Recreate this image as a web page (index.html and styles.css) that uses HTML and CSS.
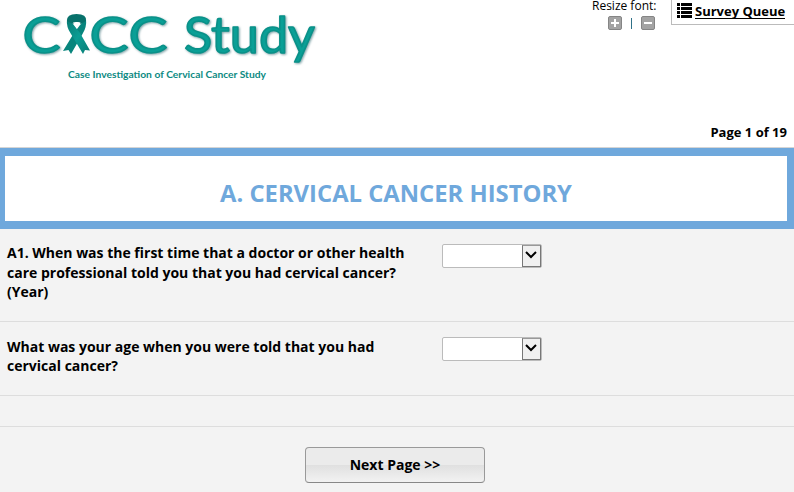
FILE: index.html
```html
<!DOCTYPE html>
<html lang="en">
<head>
    <meta charset="UTF-8">
    <meta name="viewport" content="width=device-width, initial-scale=1.0">
    <title>CACC Study</title>
    <link rel="stylesheet" href="styles.css">
</head>
<body>
    <header class="header">
        <svg class="logo" width="330" height="90" viewBox="0 0 330 90" role="img" aria-label="CACC Study">
            <defs>
                <linearGradient id="ribbon" x1="0" y1="0" x2="1" y2="1">
                    <stop offset="0" stop-color="#087a73"/>
                    <stop offset="0.5" stop-color="#0b9d94"/>
                    <stop offset="1" stop-color="#087a73"/>
                </linearGradient>
            </defs>
            <g class="logo-title">
                <text x="22.500" y="52.500" textLength="38" lengthAdjust="spacingAndGlyphs">C</text>
                <text x="89.500" y="52.500" textLength="39" lengthAdjust="spacingAndGlyphs">C</text>
                <text x="128.500" y="52.500" textLength="39" lengthAdjust="spacingAndGlyphs">C</text>
                <text x="184" y="52.500" textLength="131" lengthAdjust="spacingAndGlyphs">Study</text>
            </g>
            <!-- awareness ribbon -->
            <path d="M86 19 Q87 27 82.500 34 L71 54 L68.500 50 L63 51 L74 33 L80 25 Z" fill="#08857d"/>
            <path d="M67 19 Q66 27 71 34 L83 54 L85 50 L90 50.500 L80 33 L73 24 Z" fill="url(#ribbon)"/>
            <path d="M67 21 Q66.500 14 76.500 14 Q87 14 86 21 L81 24 Q77 20 73 24 Z" fill="#08716b"/>
            <path d="M73 22.500 Q76.500 21.500 80.500 22.500 L76.800 28.500 Z" fill="#fff"/>
            <text class="logo-sub" x="68" y="78" textLength="198" lengthAdjust="spacingAndGlyphs">Case Investigation of Cervical Cancer Study</text>
        </svg>

        <div class="tools">
            <div class="resize">
                <div>Resize font:</div>
                <div class="resize-buttons">
                    <svg width="14" height="14" viewBox="0 0 14 14">
                        <rect x="0.500" y="0.500" width="13" height="13" rx="1.500" fill="#a3a3a3" stroke="#858585"/>
                        <path d="M7 3V11M3 7H11" stroke="#fff" stroke-width="2"/>
                    </svg>
                    <span class="divider"></span>
                    <svg width="14" height="14" viewBox="0 0 14 14">
                        <rect x="0.500" y="0.500" width="13" height="13" rx="1.500" fill="#a3a3a3" stroke="#858585"/>
                        <path d="M3 7H11" stroke="#fff" stroke-width="2"/>
                    </svg>
                </div>
            </div>
            <a class="queue">
                <svg width="15" height="15" viewBox="0 0 15 15" shape-rendering="crispEdges">
                    <path d="M0 1.500H3M4 1.500H15M0 5.500H3M4 5.500H15M0 9.500H3M4 9.500H15M0 13.500H3M4 13.500H15" stroke="#000" stroke-width="3"/>
                </svg>
                <span>Survey Queue</span>
            </a>
        </div>
        <div class="page-num">Page 1 of 19</div>
    </header>

    <h1 class="section-title">A. CERVICAL CANCER HISTORY</h1>

    <form class="survey">
        <div class="row row-year">
            <label class="question" for="year">A1. When was the first time that a doctor or other health care professional told you that you had cervical cancer? (Year)</label>
            <div class="select">
                <input type="text" id="year">
                <span class="arrow"><svg width="12" height="8" viewBox="0 0 12 8"><path d="M1 1L6 6L11 1" fill="none" stroke="#000" stroke-width="2"/></svg></span>
            </div>
        </div>
        <div class="row row-age">
            <label class="question" for="age">What was your age when you were told that you had cervical cancer?</label>
            <div class="select">
                <input type="text" id="age">
                <span class="arrow"><svg width="12" height="8" viewBox="0 0 12 8"><path d="M1 1L6 6L11 1" fill="none" stroke="#000" stroke-width="2"/></svg></span>
            </div>
        </div>
        <div class="row row-empty"></div>
        <button type="button" class="next">Next Page &gt;&gt;</button>
    </form>
</body>
</html>
```
FILE: styles.css
```css
* {
    margin: 0;
    padding: 0;
    box-sizing: border-box;
}

body {
    font-family: "Open Sans", sans-serif;
    background-color: #f3f3f3;
    color: #000;
    height: 492px;
    overflow: hidden;
}

.header {
    display: grid;
    grid-template-columns: 330px 1fr;
    grid-template-rows: 123px 24px;
    height: 148px;
    background-color: #fff;
    border-bottom: 1px solid #d5d5d5;
}

.logo-title {
    font-family: Lato, sans-serif;
    font-size: 50px;
    font-weight: 400;
    fill: #0a9f96;
    stroke: #0a9189;
    stroke-width: 1.6px;
    stroke-linejoin: round;
    filter: drop-shadow(1px 1px 1px rgba(0, 70, 80, 0.5));
}

.logo-sub {
    font-family: Lato, sans-serif;
    font-size: 9.500px;
    font-weight: 700;
    fill: #0c8a82;
}

.tools {
    display: flex;
    justify-content: flex-end;
    align-items: flex-start;
}

.resize {
    width: 66px;
    margin-right: 13px;
    font-size: 12px;
    line-height: 12px;
    white-space: nowrap;
}

.resize-buttons {
    display: flex;
    align-items: center;
    gap: 9px;
    padding: 4px 0 0 16px;
}

.divider {
    width: 1px;
    height: 11px;
    background-color: #2f7188;
}

.queue {
    display: flex;
    gap: 3px;
    width: 123px;
    height: 25px;
    padding: 3px 0 0 5px;
    border-left: 1px solid #bbb;
    border-bottom: 1px solid #bbb;
    font-size: 13px;
    font-weight: 700;
    line-height: 16px;
    white-space: nowrap;
}

.queue span {
    height: 16px;
    border-bottom: 1px solid #000;
}

.page-num {
    grid-column: 2;
    padding-right: 7px;
    text-align: right;
    font-size: 13px;
    font-weight: 700;
    line-height: 19px;
}

.section-title {
    height: 81px;
    padding-top: 4px;
    background-color: #fff;
    border: solid #6fa8dc;
    border-width: 8px 7px 8px 5px;
    color: #6fa8dc;
    font-size: 23.800px;
    line-height: 66px;
    text-align: center;
}

.row {
    display: flex;
    align-items: flex-start;
    border-bottom: 1px solid #ddd;
}

.row-year {
    height: 93px;
    padding: 15px 0 0 7px;
}

.row-age {
    height: 74px;
    padding: 15px 0 0 7px;
}

.row-empty {
    height: 31px;
}

.question {
    width: 405px;
    margin-right: 30px;
    font-size: 14px;
    font-weight: 700;
    line-height: 19.500px;
}

.row-year .question {
    margin-top: -1px;
}

.row-age .question {
    line-height: 19px;
}

.select {
    display: flex;
    width: 100px;
    height: 24px;
    background-color: #fff;
    border: 1px solid #bbb;
    border-radius: 2px;
}

.select input {
    width: 79px;
    border: none;
    background: none;
    outline: none;
}

.arrow {
    display: flex;
    justify-content: center;
    width: 19px;
    padding: 5px 1px 0 0;
    background-color: #f0f0f0;
    border: 1px solid #777;
    border-top-color: #999;
}

.next {
    display: block;
    width: 180px;
    height: 36px;
    margin: 20px 0 0 305px;
    padding-bottom: 2px;
    border: 1px solid #999;
    border-bottom-color: #888;
    border-radius: 4px;
    background: linear-gradient(#ebebeb 0%, #ebebeb 50%, #e0e0e0 51%, #f2f2f2 100%);
    font-family: inherit;
    font-size: 14px;
    font-weight: 700;
    color: #000;
}
```
